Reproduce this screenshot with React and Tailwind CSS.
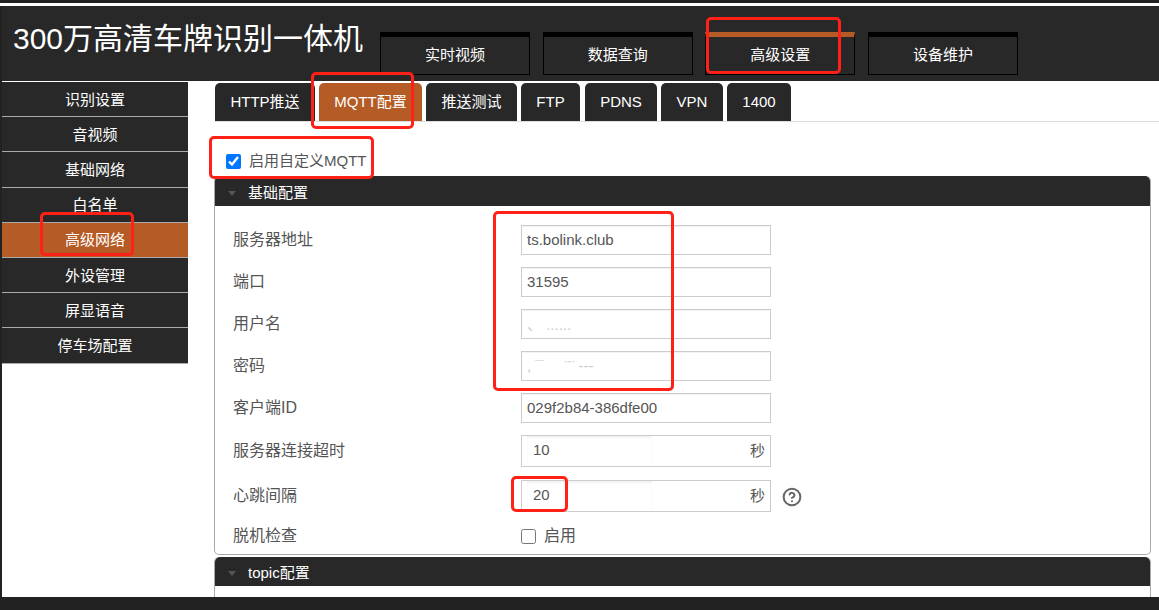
import { CircleHelp } from 'lucide-react'

const FONT = "font-['Liberation_Sans','Noto_Sans_CJK_SC',sans-serif]"

const NAV = ['实时视频', '数据查询', '高级设置', '设备维护']
const SIDE = ['识别设置', '音视频', '基础网络', '白名单', '高级网络', '外设管理', '屏显语音', '停车场配置']
const TABS = [
  { label: 'HTTP推送', w: 'w-[100px]' },
  { label: 'MQTT配置', w: 'w-[103px]', active: true },
  { label: '推送测试', w: 'w-[91px]' },
  { label: 'FTP', w: 'w-[59px]' },
  { label: 'PDNS', w: 'w-[72px] ml-px' },
  { label: 'VPN', w: 'w-[62px]' },
  { label: '1400', w: 'w-[64px]' },
]

function Field({ label, value, faded, className }) {
  return (
    <div className={`flex items-center h-[30px] ${className || ''}`}>
      <label className="w-[306px] pl-[18px] text-[16px] text-[#555]">{label}</label>
      <input
        readOnly
        value={value}
        className={`w-[250px] h-[30px] border border-[#ccc] px-[5px] pb-[2px] text-[15px] outline-none shadow-[inset_0_1px_1px_rgba(0,0,0,0.05)] ${faded ? 'text-[#c9c9c9]' : 'text-[#555]'}`}
      />
    </div>
  )
}

function UnitField({ label, value, className, children }) {
  return (
    <div className={`flex items-center h-[32px] ${className || ''}`}>
      <label className="w-[306px] pl-[18px] text-[16px] text-[#555]">{label}</label>
      <div className="w-[250px] h-[32px] border border-[#ccc] flex items-center justify-between pl-[5px] pr-[5px]">
        <input
          readOnly
          value={value}
          className="w-[125px] h-[30px] pl-[6px] pb-[3px] text-[15px] text-[#555] outline-none shadow-[inset_0_2px_2px_rgba(0,0,0,0.05)]"
        />
        <span className="text-[15px] text-[#555]">秒</span>
      </div>
      {children}
    </div>
  )
}

function PanelHead({ title, className }) {
  return (
    <div className={`bg-[#282828] flex items-center rounded-t-[5px] pt-[4px] text-white text-[15px] ${className}`}>
      <span className="ml-[13px] mr-[12px] w-0 h-0 border-x-[4px] border-x-transparent border-t-[5px] border-t-[#555]" />
      {title}
    </div>
  )
}

export default function App() {
  return (
    <div className={`relative w-[1159px] h-[610px] overflow-hidden bg-white flex flex-col ${FONT}`}>
      <div className="h-[3px] bg-[#222]" />
      <div className="h-[3px] bg-white" />

      <div className="flex-1 flex flex-col border-l-2 border-[#222] min-h-0">
        {/* Header */}
        <div className="h-[75px] bg-[#282828] flex">
          <h1 className="w-[378px] pl-[11px] pt-[14px] text-[30px] leading-[38px] text-white">300万高清车牌识别一体机</h1>
          <div className="flex gap-[12.7px] pt-[26px]">
            {NAV.map((item, i) => (
              <div
                key={item}
                className={`w-[150px] h-[43px] border border-black border-t-[5px] flex items-center justify-center text-[15px] text-white ${i === 2 ? 'border-t-[#b55b26]' : ''}`}
              >
                {item}
              </div>
            ))}
          </div>
        </div>

        <div className="flex flex-1 min-h-0">
          {/* Sidebar */}
          <div className="w-[186px] pt-px">
            {SIDE.map((item, i) => (
              <div
                key={item}
                className={`h-[35.2px] pt-[1.5px] border-b border-[#aaa] flex items-center justify-center text-[15px] text-white ${i === 4 ? 'bg-[#b55b26]' : 'bg-[#282828]'}`}
              >
                {item}
              </div>
            ))}
          </div>

          {/* Content */}
          <div className="flex-1 pl-[27px] pr-[8px] min-w-0">
            <div className="h-[41px] pt-[2px] border-b border-[#ddd] flex gap-[4px] -mr-[8px]">
              {TABS.map((t) => (
                <div
                  key={t.label}
                  className={`${t.w} h-[38px] rounded-t-[5px] flex items-center justify-center text-[15px] text-white ${t.active ? 'bg-[#b55b26] text-[#eee]' : 'bg-[#282828]'}`}
                >
                  {t.label}
                </div>
              ))}
            </div>

            <div className="flex items-center h-[16px] mt-[31px] ml-[11px] gap-[8px]">
              <input type="checkbox" readOnly checked className="w-[15px] h-[15px] accent-[#0075ff]" />
              <span className="text-[15px] text-[#555] pt-px">启用自定义MQTT</span>
            </div>

            {/* 基础配置 */}
            <div className="mt-[7px] -ml-px border border-[#aaa] border-t-0 rounded-[5px] h-[379px]">
              <PanelHead title="基础配置" className="h-[30px]" />
              <Field label="服务器地址" value="ts.bolink.club" className="mt-[19px]" />
              <Field label="端口" value="31595" className="mt-[12px]" />
              <Field label="用户名" value="、 ......" faded className="mt-[12px]" />
              <Field label="密码" value=", ¯     ¨¨ ---" faded className="mt-[12px]" />
              <Field label="客户端ID" value="029f2b84-386dfe00" className="mt-[12px]" />
              <UnitField label="服务器连接超时" value="10" className="mt-[12px]" />
              <UnitField label="心跳间隔" value="20" className="mt-[13px]">
                <CircleHelp size={20} strokeWidth={2.4} className="ml-[11px] mt-[2px] text-[#666]" />
              </UnitField>
              <div className="flex items-center h-[20px] mt-[14px]">
                <label className="w-[306px] pl-[18px] text-[16px] text-[#555]">脱机检查</label>
                <input type="checkbox" readOnly className="w-[15px] h-[15px] mr-[8px]" />
                <span className="text-[16px] text-[#555]">启用</span>
              </div>
            </div>

            {/* topic配置 */}
            <div className="mt-[2px] -ml-px border-x border-[#aaa] h-[40px] rounded-t-[5px]">
              <PanelHead title="topic配置" className="h-[29px]" />
            </div>
          </div>
        </div>
      </div>

      <div className="h-[13px] bg-[#222]" />

      {/* Red annotation boxes */}
      <div className="absolute left-[706px] top-[17px] w-[135px] h-[57px] border-[3px] border-[#ff2018] rounded-[5px]" />
      <div className="absolute left-[311px] top-[72px] w-[103px] h-[57px] border-[3px] border-[#ff2018] rounded-[5px]" />
      <div className="absolute left-[209px] top-[136px] w-[165px] h-[43px] border-[3px] border-[#ff2018] rounded-[5px]" />
      <div className="absolute left-[40px] top-[212px] w-[94px] h-[44px] border-[3px] border-[#ff2018] rounded-[5px]" />
      <div className="absolute left-[493px] top-[211px] w-[181px] h-[180px] border-[3px] border-[#ff2018] rounded-[5px]" />
      <div className="absolute left-[511px] top-[476px] w-[57px] h-[36px] border-[3px] border-[#ff2018] rounded-[5px]" />
    </div>
  )
}
